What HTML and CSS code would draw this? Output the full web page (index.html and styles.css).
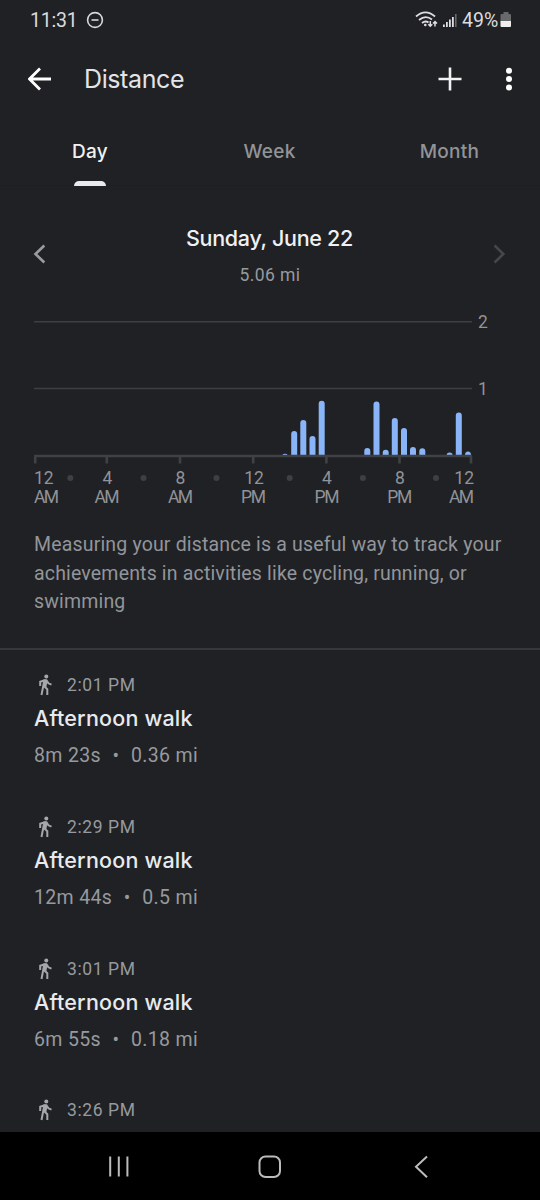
FILE: index.html
```html
<!DOCTYPE html>
<html lang="en">
<head>
<meta charset="utf-8">
<title>Distance</title>
<link rel="stylesheet" href="styles.css">
</head>
<body>
<svg width="0" height="0" class="defs">
  <symbol id="walk" viewBox="0 0 22 22"><circle cx="12.300" cy="2.500" r="2"/><path class="limbs" d="M6.200 12V7.800L10.600 6.200L12.600 6.400L14.400 9.300L17.500 10.600M10.200 7L7.500 21M10.500 12.500L13.300 15.200V21"/><path d="M9.500 5.500h3.200l.6 2.500-1 5.500-3.300-.500z"/></symbol>
</svg>
<div class="phone">
  <div class="status">
    <span class="clock">11:31</span>
    <svg class="dnd" width="18" height="18" viewBox="0 0 18 18"><circle cx="9" cy="9" r="7.400"/><path d="M5.500 9h7"/></svg>
    <svg class="signals" width="44" height="20" viewBox="0 0 44 20">
      <g class="wifi"><path d="M2 6.500Q11.500-1.700 21 6.500M5 10Q11.500 4.500 18 9.500M8 13Q11.500 10.300 14.500 12.500"/><path class="arrows" d="M16.300 11v5M14.300 14.300l2 2 2-2M21 16.500v-5M19 13.500l2-2 2 2"/></g>
      <circle cx="11.300" cy="15" r="1.300"/>
      <path d="M29 14.500h1.800v2.500H29zM32 12h1.800v5H32zM35 9.500h1.800V17H35zM38 7h1.800v10H38z"/><path class="dim" d="M41 4h1.600v13H41z"/>
    </svg>
    <span class="percent">49%</span>
    <svg class="battery" width="12" height="16" viewBox="0 0 12 16"><path class="dim" d="M3.500 0h5v2H10q1 0 1 1v7H.500V3q0-1 1-1h2z"/><path d="M.500 9H11v5q0 1-1 1H1.500q-1 0-1-1z"/></svg>
  </div>
  <header class="appbar">
    <svg class="back" width="24" height="24" viewBox="0 0 24 24"><path d="M23 12H2M12 1.500L1.500 12 12 22.500"/></svg>
    <h1>Distance</h1>
    <svg class="add" width="24" height="24" viewBox="0 0 24 24"><path d="M12 .500v23M.500 12h23"/></svg>
    <svg class="more" width="8" height="24" viewBox="0 0 8 24"><circle cx="4" cy="3.700" r="3"/><circle cx="4" cy="12" r="3"/><circle cx="4" cy="20.500" r="3"/></svg>
  </header>
  <nav class="tabs">
    <span class="tab active">Day</span><span class="tab">Week</span><span class="tab">Month</span>
  </nav>
  <section class="date">
    <svg class="prev" width="12" height="20" viewBox="0 0 12 20"><path d="M11.300 1.500L2.500 10l8.800 8.500"/></svg>
    <div class="day"><h2>Sunday, June 22</h2><p>5.06 mi</p></div>
    <svg class="next" width="12" height="20" viewBox="0 0 12 20"><path d="M.500 1.500L9.300 10 .500 18.500"/></svg>
  </section>
  <svg class="chart" width="540" height="206" viewBox="0 306 540 206">
    <path class="grid" d="M34 321.700h438M34 388.500h438"/>
    <path class="bars" d="M282.500 455q0-1.200 2.500-1.200t2.500 1.200zM291.200 455v-21a3 3 0 0 1 6 0v21zM300.300 455v-32a3 3 0 0 1 6 0v32zM309.500 455v-16a3 3 0 0 1 6 0v16zM318.700 455v-51.300a3 3 0 0 1 6 0V455zM364.300 455v-4a3 3 0 0 1 6 0v4zM373.500 455v-50.500a3 3 0 0 1 6 0V455zM382.700 455v-2.200a3 3 0 0 1 6 0v2.200zM391.800 455v-34a3 3 0 0 1 6 0v34zM401 455v-24a3 3 0 0 1 6 0v24zM410 455v-5a3 3 0 0 1 6 0v5zM419.300 455v-3.800a3 3 0 0 1 6 0v3.800zM446.600 455q0-2.500 3-2.500t3 2.500zM455.800 455v-39.500a3 3 0 0 1 6 0V455zM465 455q0-3.500 3-3.500t3 3.500z"/>
    <path class="axis" d="M34 456h438M35.200 456v7.500M106.800 456v7.500M180 456v7.500M253.200 456v7.500M326.400 456v7.500M399.500 456v7.500M471 456v7.500"/>
    <g class="dots"><circle cx="70.300" cy="478" r="3"/><circle cx="143.500" cy="478" r="3"/><circle cx="216.500" cy="478" r="3"/><circle cx="289.700" cy="478" r="3"/><circle cx="362.900" cy="478" r="3"/><circle cx="436" cy="478" r="3"/></g>
    <g class="labels">
      <text x="478" y="328">2</text><text x="478" y="394.500">1</text>
      <text x="34" y="484">12</text><text x="34" y="503.300" textLength="25">AM</text>
      <g class="mid"><text x="107.300" y="484">4</text><text x="107" y="503.300" textLength="25">AM</text>
      <text x="180.300" y="484">8</text><text x="180.500" y="503.300" textLength="25">AM</text>
      <text x="254" y="484">12</text><text x="253.500" y="503.300" textLength="25">PM</text>
      <text x="326.800" y="484">4</text><text x="327" y="503.300" textLength="25">PM</text>
      <text x="400" y="484">8</text><text x="399.700" y="503.300" textLength="25">PM</text></g>
      <g class="end"><text x="474" y="484">12</text><text x="474" y="503.300" textLength="25">AM</text></g>
    </g>
  </svg>
  <p class="about">Measuring your distance is a useful way to track your achievements in activities like cycling, running, or swimming</p>
  <main class="list">
    <article><div class="time"><svg width="22" height="22"><use href="#walk"/></svg>2:01 PM</div><h3>Afternoon walk</h3><p>8m 23s<i>•</i>0.36 mi</p></article>
    <article><div class="time"><svg width="22" height="22"><use href="#walk"/></svg>2:29 PM</div><h3>Afternoon walk</h3><p>12m 44s<i>•</i>0.5 mi</p></article>
    <article><div class="time"><svg width="22" height="22"><use href="#walk"/></svg>3:01 PM</div><h3>Afternoon walk</h3><p>6m 55s<i>•</i>0.18 mi</p></article>
    <article><div class="time"><svg width="22" height="22"><use href="#walk"/></svg>3:26 PM</div></article>
  </main>
  <footer class="navbar">
    <svg width="540" height="68" viewBox="0 1132 540 68"><path d="M110.200 1156.500v20M118.800 1156.500v20M127.400 1156.500v20M427 1156.500l-11 10.300 11 10.500"/><rect x="259.500" y="1156.500" width="20.500" height="20.500" rx="6"/></svg>
  </footer>
</div>
</body>
</html>
```

FILE: styles.css
```css
* { box-sizing: border-box; }
body { margin: 0; background: #202124; }
h1, h2, h3, p { margin: 0; }
.defs { position: absolute; }
.phone { width: 540px; height: 1200px; overflow: hidden; display: flex; flex-direction: column; background: #202124; color: #969a9f; font-family: Roboto, sans-serif; }
.phone > * { flex-shrink: 0; }
.status { height: 40px; display: flex; align-items: center; padding: 0 28px 0 30px; color: #dcdcde; font-size: 19.5px; }
.clock { letter-spacing: -.2px; width: 56px; }
.dnd { fill: none; stroke: #d8d8da; stroke-width: 1.6; }
.signals { margin-left: auto; margin-right: 2px; fill: #dedee0; }
.wifi { fill: none; stroke: #dedee0; stroke-width: 1.8; }
.arrows { stroke-width: 1.5; }
.dim { fill: #68696b; }
.percent { width: 38px; margin-left: 2px; }
.battery { fill: #eee; }
.appbar { height: 78px; display: flex; align-items: center; padding: 0 27px 0 28px; }
.back { fill: none; stroke: #fff; stroke-width: 2.8; }
h1 { font: 400 25px/30px Inter, sans-serif; letter-spacing: -.4px; color: #e3e4e7; margin-left: 32px; }
.add { margin-left: auto; stroke: #f2f2f3; stroke-width: 2.6; }
.more { margin-left: 43px; fill: #fff; }
.tabs { height: 68px; display: grid; grid-template-columns: repeat(3, 180px); border-bottom: 1px solid #1e1f21; font: 500 19px Inter, sans-serif; letter-spacing: .25px; color: #919499; }
.tab { text-align: center; padding-top: 22px; line-height: 24px; }
.tab:not(.active) { position: relative; left: -.5px; }
.active { color: #f1f1f3; }
.active::after { content: ""; display: block; width: 32px; height: 5px; margin: 17px auto 0; background: #e8eaed; border-radius: 5px 5px 0 0; }
.date { height: 120px; display: flex; padding: 0 34px 0 33px; }
.prev, .next { margin-top: 58px; fill: none; stroke: #999b9f; stroke-width: 2.6; }
.next { stroke: #45474a; }
.day { flex: 1; text-align: center; padding-top: 38px; }
.day h2 { font: 500 21.500px/28px Inter, sans-serif; color: #f0f0f2; letter-spacing: -.3px; }
.day p { font-size: 17.500px; line-height: 20px; margin-top: 13px; letter-spacing: .4px; padding-left: 1px; }
.chart { display: block; }
.grid { stroke: #3c4043; stroke-width: 1.4; }
.bars { fill: #8ab4f8; }
.axis { stroke: #3f4145; stroke-width: 2.6; fill: none; }
.dots { fill: #3c4043; }
.labels { fill: #909397; font: 17.500px Roboto, sans-serif; }
.mid { text-anchor: middle; }
.end { text-anchor: end; }
.about { height: 138px; padding: 19px 30px 0 34px; border-bottom: 2px solid #35373a; font-size: 19.500px; line-height: 28.500px; letter-spacing: .17px; color: #92959a; }
.list { height: 482px; overflow: hidden; padding: 21px 34px 0; }
article { height: 141.750px; }
.time { height: 28px; display: flex; align-items: center; gap: 11px; font-size: 17.500px; letter-spacing: .6px; }
.time svg { fill: #a5a7aa; }
.limbs { fill: none; stroke: #a5a7aa; stroke-width: 2; }
h3 { font: 500 21.500px/28px Inter, sans-serif; letter-spacing: .2px; color: #e8eaed; margin-top: 5px; }
article p { font-size: 19.500px; line-height: 26px; margin-top: 11px; letter-spacing: .35px; }
article i { font-style: normal; margin: 0 11.500px; }
.navbar { height: 68px; background: #000; }
.navbar svg { display: block; fill: none; stroke: #bcbcbe; stroke-width: 2; }
```
